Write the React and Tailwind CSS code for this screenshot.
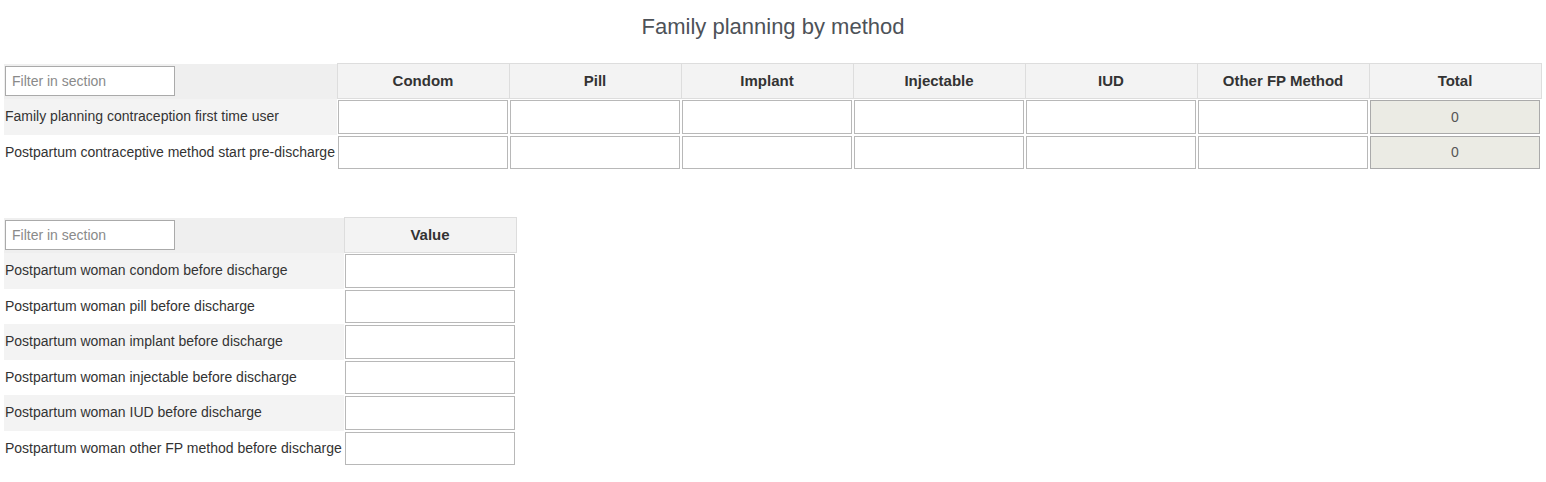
const methods = ["Condom", "Pill", "Implant", "Injectable", "IUD", "Other FP Method"]

const topRows = [
    "Family planning contraception first time user",
    "Postpartum contraceptive method start pre-discharge",
]

const bottomRows = [
    "Postpartum woman condom before discharge",
    "Postpartum woman pill before discharge",
    "Postpartum woman implant before discharge",
    "Postpartum woman injectable before discharge",
    "Postpartum woman IUD before discharge",
    "Postpartum woman other FP method before discharge",
]

function FilterInput() {
    return (
        <input
            type="text"
            placeholder="Filter in section"
            className="h-[30px] w-[170px] border border-[#aaaaaa] bg-white px-[6px] text-[14px] font-normal text-[#333] outline-none placeholder:text-[#8a8a8a]"
        />
    )
}

function ValueInput() {
    return <input type="text" className="block h-[33.5px] w-full border border-[#b8b8b8] bg-white outline-none" />
}

function TotalInput() {
    return (
        <input
            type="text"
            readOnly
            value="0"
            className="block h-[33.5px] w-full border border-[#aaaaaa] bg-[#ebebe4] text-center text-[14px] text-[#555] outline-none"
        />
    )
}

export default function App() {
    return (
        <div className="min-h-screen bg-white px-1 font-['Liberation_Sans',Arial,sans-serif] text-[#333]">
            <h2 className="pt-[14px] pb-[23px] text-center text-[22px] leading-[26px] font-normal text-[#4d5258]">
                Family planning by method
            </h2>

            <table className="border-collapse">
                <thead>
                    <tr>
                        <th className="h-[35px] w-[333px] bg-[#efefef] px-px text-left align-middle">
                            <FilterInput />
                        </th>
                        {methods.map((m) => (
                            <th key={m} className="h-[35px] w-[172px] border border-[#dddddd] bg-[#f3f3f3] text-[15px] font-bold text-[#333]">
                                {m}
                            </th>
                        ))}
                        <th className="h-[35px] w-[172px] border border-[#dddddd] bg-[#f3f3f3] text-[15px] font-bold text-[#333]">
                            Total
                        </th>
                    </tr>
                </thead>
                <tbody>
                    {topRows.map((label, i) => (
                        <tr key={label}>
                            <td className={`whitespace-nowrap px-px text-[14px] ${i % 2 === 0 ? "bg-[#f3f3f3]" : "bg-white"}`}>
                                {label}
                            </td>
                            {methods.map((m) => (
                                <td key={m} className="p-px">
                                    <ValueInput />
                                </td>
                            ))}
                            <td className="p-px">
                                <TotalInput />
                            </td>
                        </tr>
                    ))}
                </tbody>
            </table>

            <table className="mt-[47px] border-collapse">
                <thead>
                    <tr>
                        <th className="h-[35px] w-[340px] bg-[#efefef] px-px text-left align-middle">
                            <FilterInput />
                        </th>
                        <th className="h-[35px] w-[172px] border border-[#dddddd] bg-[#f3f3f3] text-[15px] font-bold text-[#333]">
                            Value
                        </th>
                    </tr>
                </thead>
                <tbody>
                    {bottomRows.map((label, i) => (
                        <tr key={label}>
                            <td className={`whitespace-nowrap px-px text-[14px] ${i % 2 === 0 ? "bg-[#f3f3f3]" : "bg-white"}`}>
                                {label}
                            </td>
                            <td className="p-px">
                                <ValueInput />
                            </td>
                        </tr>
                    ))}
                </tbody>
            </table>
        </div>
    )
}
